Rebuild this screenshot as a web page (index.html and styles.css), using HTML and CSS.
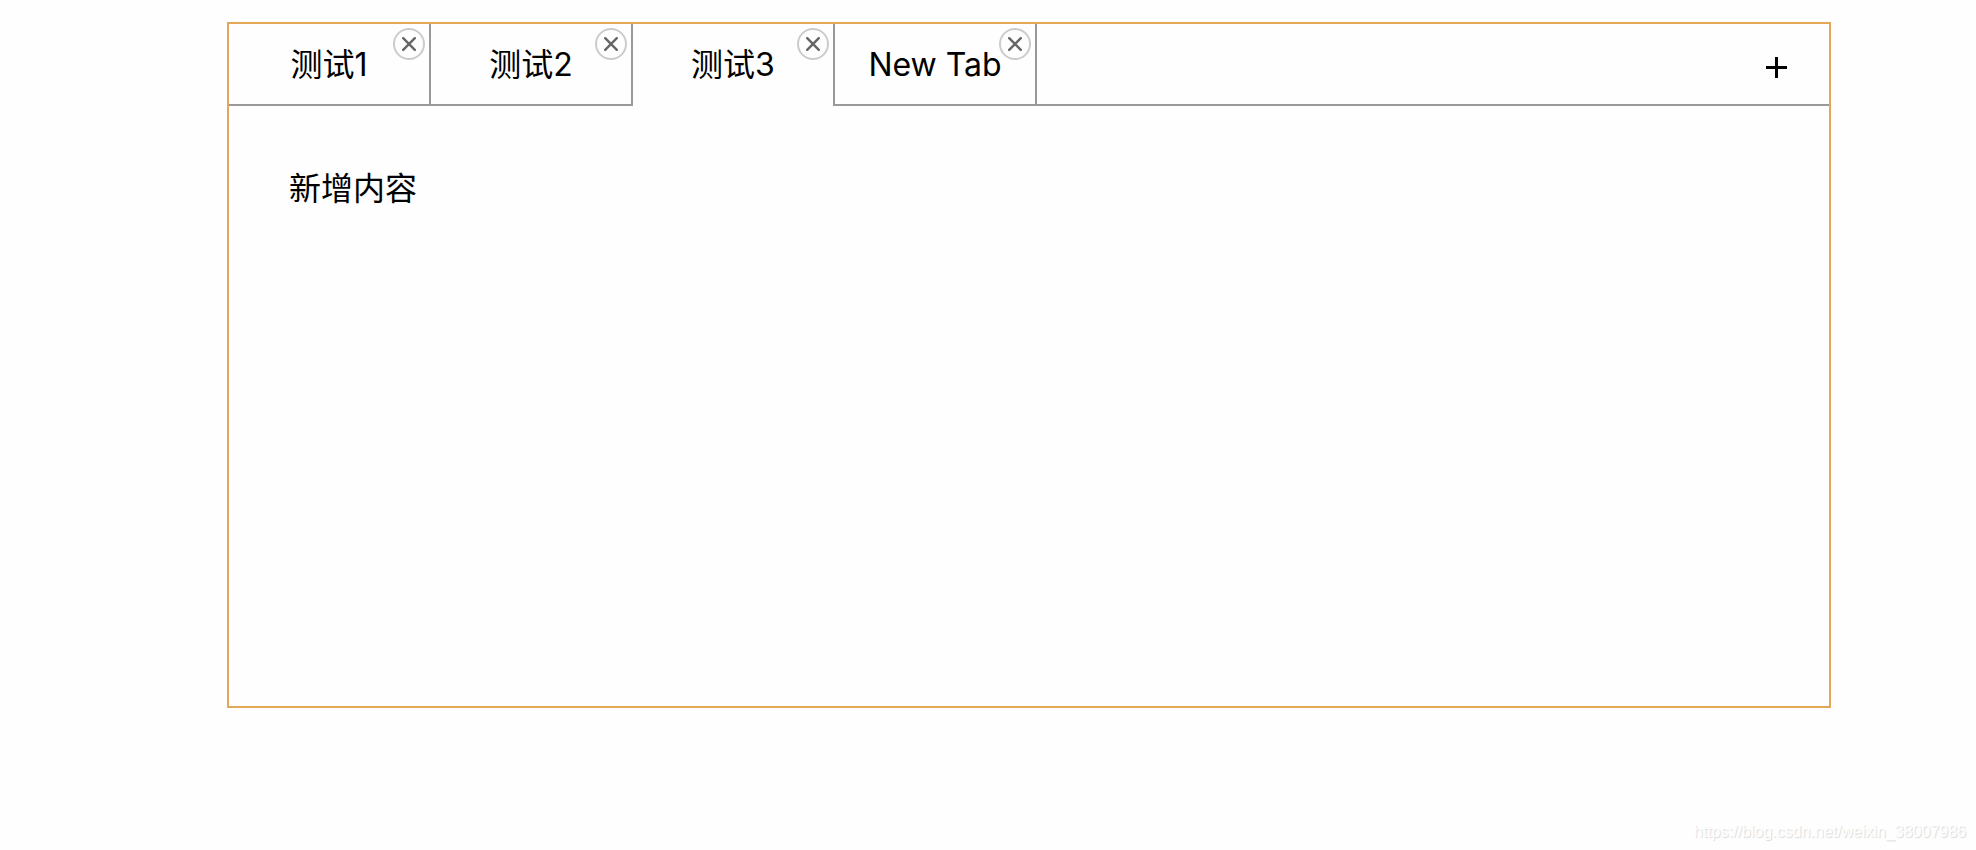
FILE: index.html
```html
<!DOCTYPE html>
<html lang="zh-CN">
<head>
<meta charset="utf-8">
<meta name="viewport" content="width=device-width, initial-scale=1">
<title>Tabs</title>
<link rel="stylesheet" href="styles.css">
</head>
<body>
<main class="tabs">
  <header class="tabs-header">
    <div class="tab">
      <button class="tab-label" type="button">测试1</button>
      <button class="tab-close" type="button" aria-label="Close 测试1"><svg class="icon-close" viewBox="0 0 14 14"><path d="M1.2 1.2 12.8 12.8M12.8 1.2 1.2 12.8"/></svg></button>
    </div>
    <div class="tab">
      <button class="tab-label" type="button">测试2</button>
      <button class="tab-close" type="button" aria-label="Close 测试2"><svg class="icon-close" viewBox="0 0 14 14"><path d="M1.2 1.2 12.8 12.8M12.8 1.2 1.2 12.8"/></svg></button>
    </div>
    <div class="tab tab-active">
      <button class="tab-label" type="button">测试3</button>
      <button class="tab-close" type="button" aria-label="Close 测试3"><svg class="icon-close" viewBox="0 0 14 14"><path d="M1.2 1.2 12.8 12.8M12.8 1.2 1.2 12.8"/></svg></button>
    </div>
    <div class="tab">
      <button class="tab-label" type="button">New Tab</button>
      <button class="tab-close" type="button" aria-label="Close New Tab"><svg class="icon-close" viewBox="0 0 14 14"><path d="M1.2 1.2 12.8 12.8M12.8 1.2 1.2 12.8"/></svg></button>
    </div>
    <div class="tabs-tools">
      <button class="tab-add" type="button" aria-label="Add tab"><svg class="icon-add" viewBox="0 0 21 21"><path d="M10.5 0V21M0 10.5H21"/></svg></button>
    </div>
  </header>
  <section class="tabs-content">新增内容</section>
</main>
<footer class="watermark">https://blog.csdn.net/weixin_38007986</footer>
</body>
</html>
```
FILE: styles.css
```css
* {
  box-sizing: border-box;
}

body {
  display: flex;
  flex-direction: column;
  min-height: 100vh;
  margin: 0;
  padding: 22px 10px 8px 227px;
  background: #fefefe;
  color: #000;
  font-family: Inter, "Noto Sans CJK SC", sans-serif;
  font-size: 32px;
  line-height: 46px;
}

button {
  padding: 0;
  border: 0;
  background: none;
  color: inherit;
  font: inherit;
  cursor: pointer;
}

.tabs {
  margin-right: 135px;
  border: 2px solid #e3a857;
}

.tabs-header {
  display: flex;
}

.tab {
  position: relative;
  width: 202px;
  height: 82px;
  border-right: 2px solid #999;
  border-bottom: 2px solid #999;
}

.tab-active {
  border-bottom: 0;
}

.tab-label {
  width: 100%;
  height: 80px;
  padding-top: 2px;
}

.tab-close {
  position: absolute;
  top: 4px;
  right: 4px;
  display: flex;
  align-items: center;
  justify-content: center;
  width: 32px;
  height: 32px;
  border: 2px solid #ccc;
  border-radius: 50%;
}

.icon-close {
  width: 14px;
  height: 14px;
  fill: none;
  stroke: #666;
  stroke-width: 2.4;
  stroke-linecap: round;
}

.tabs-tools {
  display: flex;
  flex: 1;
  align-items: center;
  justify-content: flex-end;
  padding: 6px 42px 0 0;
  border-bottom: 2px solid #999;
}

.tab-add {
  display: flex;
}

.icon-add {
  width: 21px;
  height: 21px;
  fill: none;
  stroke: #000;
  stroke-width: 3;
}

.tabs-content {
  min-height: 600px;
  padding: 60px;
}

.watermark {
  margin-top: auto;
  color: #fff;
  font: 16px/20px "Liberation Sans", sans-serif;
  text-align: right;
  text-shadow: 1px 1px 1px #d8d8d8;
}
```
